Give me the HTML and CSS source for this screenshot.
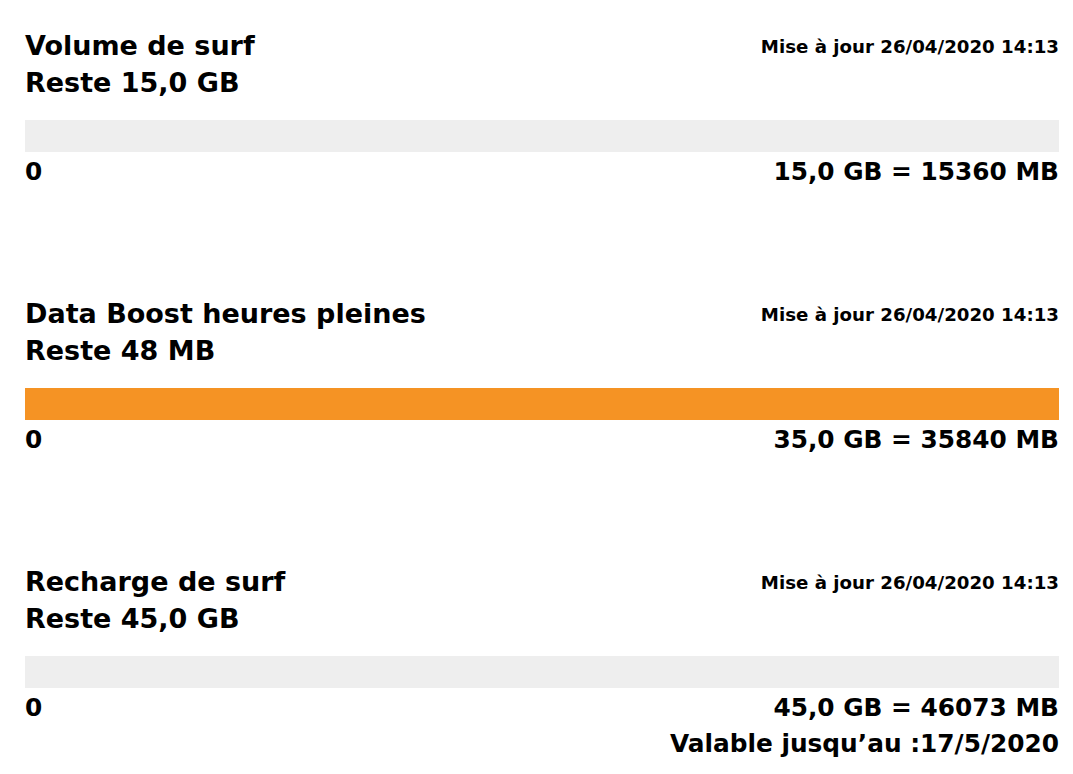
FILE: index.html
```html
<!DOCTYPE html>
<html lang="fr">
<head>
    <meta charset="UTF-8">
    <meta name="viewport" content="width=device-width, initial-scale=1.0">
    <title>Consommation</title>
    <link rel="stylesheet" href="styles.css">
</head>
<body>

<div class="usage">
    <div class="usage-head">
        <div class="usage-title">
            <div>Volume de surf</div>
            <div>Reste 15,0 GB</div>
        </div>
        <div class="usage-date">Mise à jour 26/04/2020 14:13</div>
    </div>
    <div class="bar"><div class="bar-fill" style="width: 0%"></div></div>
    <div class="scale">
        <span>0</span>
        <span>15,0 GB = 15360 MB</span>
    </div>
</div>

<div class="usage">
    <div class="usage-head">
        <div class="usage-title">
            <div>Data Boost heures pleines</div>
            <div>Reste 48 MB</div>
        </div>
        <div class="usage-date">Mise à jour 26/04/2020 14:13</div>
    </div>
    <div class="bar"><div class="bar-fill" style="width: 100%"></div></div>
    <div class="scale">
        <span>0</span>
        <span>35,0 GB = 35840 MB</span>
    </div>
</div>

<div class="usage">
    <div class="usage-head">
        <div class="usage-title">
            <div>Recharge de surf</div>
            <div>Reste 45,0 GB</div>
        </div>
        <div class="usage-date">Mise à jour 26/04/2020 14:13</div>
    </div>
    <div class="bar"><div class="bar-fill" style="width: 0%"></div></div>
    <div class="scale">
        <span>0</span>
        <span>45,0 GB = 46073 MB</span>
    </div>
    <div class="valid">Valable jusqu’au :17/5/2020</div>
</div>

</body>
</html>
```

FILE: styles.css
```css
body {
    margin: 0;
    padding: 27px 14px 0 25px;
    font-family: "DejaVu Sans", "Liberation Sans", sans-serif;
    font-weight: bold;
    background-color: #fff;
    color: #000;
}
.usage {
    height: 268px;
}
.usage:last-child {
    height: auto;
}
.usage-head {
    display: flex;
    justify-content: space-between;
    align-items: flex-start;
}
.usage-title {
    font-size: 27px;
    line-height: 37px;
}
.usage-date {
    font-size: 18.2px;
    line-height: 37px;
    padding-top: 1px;
}
.bar {
    margin-top: 19px;
    height: 32px;
    background-color: #eeeeee;
}
.bar-fill {
    height: 100%;
    background-color: #f59324;
}
.scale {
    display: flex;
    justify-content: space-between;
    margin-top: 3px;
    font-size: 24.8px;
    line-height: 33px;
}
.valid {
    margin-top: 3px;
    text-align: right;
    font-size: 24.8px;
    line-height: 33px;
}
```
